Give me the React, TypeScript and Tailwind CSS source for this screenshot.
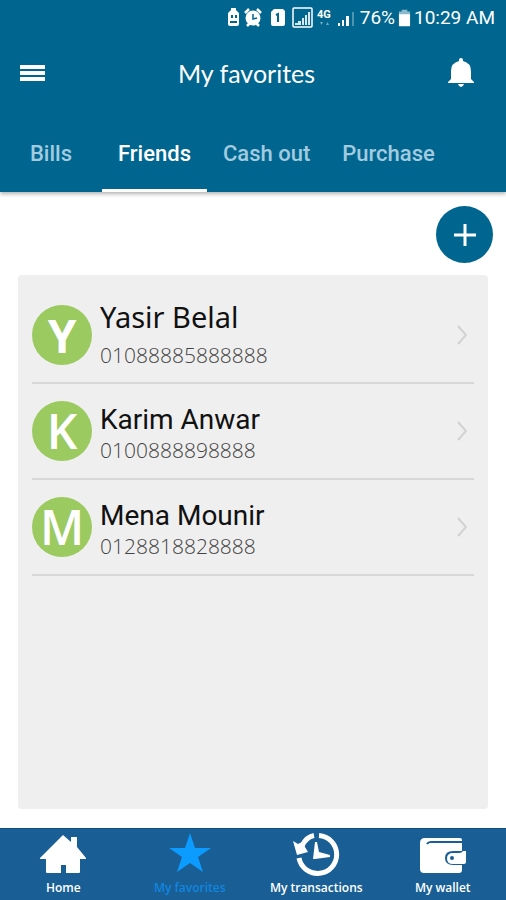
import React from "react";

type Friend = { name: string; phone: string; initial: string; nameFont: string; initialFont: string };

const friends: Friend[] = [
  {
    name: "Yasir Belal",
    phone: "01088885888888",
    initial: "Y",
    nameFont: "font-['Noto_Sans',sans-serif] text-[29px] pb-2",
    initialFont: "font-bold text-[46px]",
  },
  {
    name: "Karim Anwar",
    phone: "0100888898888",
    initial: "K",
    nameFont: "font-['Roboto',sans-serif] text-[28px] pt-[6px]",
    initialFont: "font-semibold text-[48px]",
  },
  {
    name: "Mena Mounir",
    phone: "0128818828888",
    initial: "M",
    nameFont: "font-['Roboto',sans-serif] text-[28px] pt-[6px]",
    initialFont: "font-semibold text-[48px]",
  },
];

const tabs = ["Bills", "Friends", "Cash out", "Purchase"];

function StatusBar() {
  return (
    <div className="flex h-9 items-center justify-end pr-[11px] text-[19px] leading-9 text-white">
      <svg width="134" height="24" viewBox="0 0 134 24" fill="#fff" aria-hidden="true">
        <path d="M5 2h5v2l3 3v11q0 2-2 2H4q-2 0-2-2V7l3-3z" />
        <path d="M5 9h2v3H5zM9 9h2v3H9zM4 15h7v2H4z" fill="#00668f" />
        <circle cx="27" cy="12" r="7.5" />
        <path d="M19 7l4-4M35 7l-4-4M21 20l3-3M33 20l-3-3" stroke="#fff" strokeWidth="2.5" />
        <path d="M27 8v5l4-1" stroke="#00668f" strokeWidth="1.5" fill="none" />
        <path d="M48 3h9l2 2v13q0 2-2 2H47q-2 0-2-2V6z" />
        <path d="M50 9l2-1v8" stroke="#00668f" strokeWidth="2" fill="none" />
        <rect x="67" y="2" width="19" height="19" rx="1" fill="none" stroke="#fff" strokeWidth="1.5" />
        <path d="M69 19v-2h3v2zM72 19v-4h3v4zM76 19v-7h2v7zM79 19V9h2v10zM82 19V6h2v13z" opacity=".85" />
        <text x="91" y="12" fontSize="11" fontWeight="700" fontFamily="Roboto, sans-serif">4G</text>
        <path d="M94 16h3l-1.500 3zM100 19h3l-1.500-3z" opacity=".45" />
        <path d="M112 20v-3h2v3zM116 20v-6h2v6zM120 20V10h3v10z" />
        <path d="M126 20V6h2v14z" opacity=".3" />
      </svg>
      <span>76%</span>
      <svg className="mx-[3px]" width="13" height="20" viewBox="0 0 14 20" fill="#fff" aria-hidden="true">
        <path d="M4 1h6v2h3v4H1V3h3z" opacity=".55" />
        <path d="M1 6h12v12q0 1-1 1H2q-1 0-1-1z" />
      </svg>
      <span>10:29 AM</span>
    </div>
  );
}

function Header() {
  return (
    <header className="relative z-10 bg-[#00668f] shadow-[0_2px_4px_rgba(0,0,0,0.3)]">
      <StatusBar />
      <div className="flex h-[74px] items-center justify-between px-5">
        <button type="button" aria-label="Menu">
          <svg width="25" height="18" viewBox="0 0 25 18" fill="#fff">
            <path d="M0 1h25v4H0zM0 7h25v4H0zM0 13h25v4H0z" />
          </svg>
        </button>
        <h1 className="font-['Lato',sans-serif] text-[25px] leading-8 text-white">My favorites</h1>
        <button type="button" aria-label="Notifications" className="mr-3">
          <svg width="26" height="30" viewBox="0 0 26 30" fill="#fff">
            <path d="M11 2q0-2 2-2t2 2v1q8 2 8 10v8l3 3v1H0v-1l3-3v-8Q3 5 11 3z" />
            <path d="M10 26h6q-1 3-3 3t-3-3z" />
          </svg>
        </button>
      </div>
      <div role="tablist" className="flex h-[82px] text-[22px] font-medium">
        {tabs.map((t, i) => (
          <button
            key={t}
            type="button"
            role="tab"
            aria-selected={t === "Friends"}
            className={`border-b-[3px] px-4 pt-2 ${i === 0 ? "min-w-[102px]" : ""} ${
              t === "Friends" ? "border-white text-white" : "border-transparent text-[#a3cbe0]"
            }`}
          >
            {t}
          </button>
        ))}
      </div>
    </header>
  );
}

function FriendRow({ friend }: { friend: Friend }) {
  return (
    <li className="border-b-2 border-[#d8d8d8]">
      <button type="button" className="flex h-[94px] w-full items-center text-left">
        <span
          className={`flex size-[60px] shrink-0 items-center justify-center rounded-full bg-[#9bca60] font-['Open_Sans',sans-serif] leading-none text-white ${friend.initialFont}`}
        >
          {friend.initial}
        </span>
        <span className="ml-2 flex flex-1 flex-col">
          <span className={`leading-8 text-[#111] ${friend.nameFont}`}>{friend.name}</span>
          <span className="font-['Open_Sans',sans-serif] text-[21px] leading-7 font-light text-[#444]">
            {friend.phone}
          </span>
        </span>
        <svg className="mr-[6px]" width="12" height="20" viewBox="0 0 12 20" fill="none" stroke="#d2d2d2" strokeWidth="2">
          <path d="M2 1l8 9-8 9" />
        </svg>
      </button>
    </li>
  );
}

function HomeIcon() {
  return (
    <svg width="46" height="40" viewBox="0 0 46 40" fill="#fff">
      <path d="M23 1l8 7V3h6v10l9 11v1h-6v13q0 1-1 1H26v-8h-5v8H7q-1 0-1-1V25H0v-1z" />
    </svg>
  );
}

function StarIcon() {
  return (
    <svg width="44" height="42" viewBox="0 0 44 42" fill="#0c9bff">
      <path d="M22 0l5 15h16L30 24l5 15-13-9-13 9 5-15L1 15h16z" />
    </svg>
  );
}

function HistoryIcon() {
  return (
    <svg width="48" height="44" viewBox="0 0 48 44" fill="none" stroke="#fff" strokeWidth="5">
      <path d="M27 3.500A19 19 0 1 1 7 26" />
      <path d="M10 14Q14 5 22 3.500" />
      <path d="M1 9l5 3 4-2 6 10-11 3z" fill="#fff" stroke="none" />
      <path d="M23 10h2l2 10 11 3v2l-15 2h-2z" fill="#fff" stroke="none" />
    </svg>
  );
}

function WalletIcon() {
  return (
    <svg width="46" height="38" viewBox="0 -2 46 38" fill="#fff">
      <path d="M5 1h35q2 0 2 2v11H33q-8 0-8 7t8 7h9v5q0 3-3 3H4q-4 0-4-4V6q0-5 5-5z" />
      <path d="M7 7q1-2 4-2h31" fill="none" stroke="#195f96" strokeWidth="2" />
      <path d="M33 16h6q3 0 4-2h3v11q0 2-2 2H33q-6 0-6-5.500t6-5.500z" />
      <circle cx="32" cy="21" r="2" fill="#195f96" />
    </svg>
  );
}

const navItems = [
  { label: "Home", Icon: HomeIcon },
  { label: "My favorites", Icon: StarIcon },
  { label: "My transactions", Icon: HistoryIcon },
  { label: "My wallet", Icon: WalletIcon },
];

export default function App() {
  return (
    <div className="flex min-h-screen flex-col bg-white font-['Roboto',sans-serif]">
      <Header />
      <main className="flex flex-1 flex-col px-[18px] pb-[19px]">
        <div className="-mr-[5px] flex justify-end pt-[14px] pb-3">
          <button
            type="button"
            aria-label="Add friend"
            className="flex size-[57px] items-center justify-center rounded-full bg-[#00668f]"
          >
            <svg width="22" height="22" viewBox="0 0 22 22" stroke="#fff" strokeWidth="3">
              <path d="M11 0v22M0 11h22" />
            </svg>
          </button>
        </div>
        <ul className="flex-1 rounded-sm bg-[#efefef] px-[14px] pt-[13px]">
          {friends.map((f) => (
            <FriendRow key={f.name} friend={f} />
          ))}
        </ul>
      </main>
      <nav className="grid h-[72px] grid-cols-4 border-t border-[#0d4f82] bg-[#195f96]">
        {navItems.map(({ label, Icon }) => (
          <a
            key={label}
            href="#"
            className={`flex flex-col items-center font-['Open_Sans',sans-serif] text-xs leading-4 font-semibold whitespace-nowrap ${
              label === "My favorites" ? "text-[#1185df]" : "text-white"
            }`}
          >
            <span className="flex h-[51px] items-center pb-px">
              <Icon />
            </span>
            {label}
          </a>
        ))}
      </nav>
    </div>
  );
}
